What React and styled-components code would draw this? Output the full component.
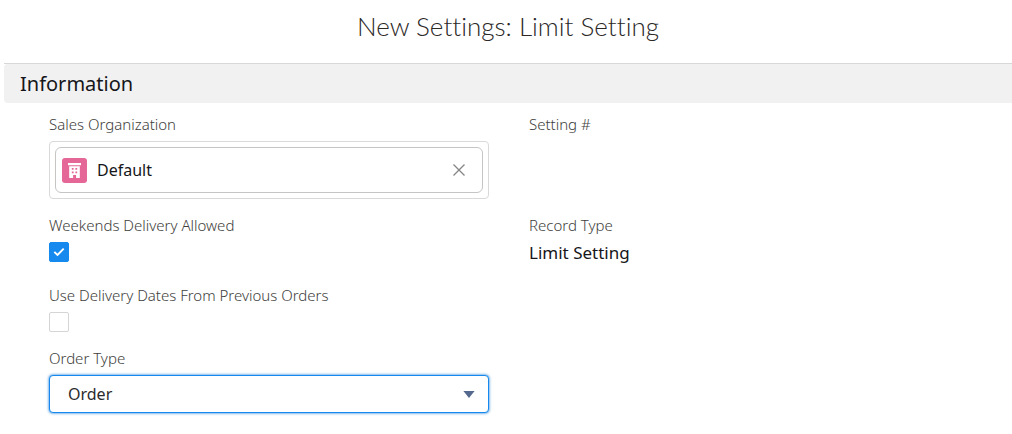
import React, { useState } from "react";
import styled, { createGlobalStyle } from "styled-components";

const GlobalStyle = createGlobalStyle`
  *, *::before, *::after { box-sizing: border-box; }
  body {
    margin: 0;
    background: #ffffff;
    color: #16161a;
    font-family: "Noto Sans", "Open Sans", sans-serif;
    font-size: 15px;
  }
`;

const Form = styled.form`
  padding-left: 4px;
`;

const Header = styled.header`
  padding: 8px 16px 19px;
  border-bottom: 1px solid #d8d8d8;
  text-align: center;
`;

const Title = styled.h1`
  margin: 0;
  font-family: Lato, sans-serif;
  font-size: 26px;
  font-weight: 300;
  font-variant-ligatures: none;
  line-height: 36px;
  color: #2b2826;
`;

const SectionTitle = styled.h2`
  margin: 0;
  padding: 7px 16px 6px;
  border-radius: 4px 0 0 4px;
  background: #f1f1f1;
  font-size: 20px;
  font-weight: 400;
  line-height: 26px;
`;

const Fields = styled.div`
  display: grid;
  grid-template-columns: 1fr 1fr;
  gap: 17px 40px;
  padding: 12px 43px 20px 45px;
`;

const Field = styled.div`
  grid-column: ${({ $column = 1 }) => $column};
  display: flex;
  flex-direction: column;
  gap: 8px;
`;

const Label = styled.label`
  align-self: flex-start;
  font-size: 15px;
  font-weight: 350;
  line-height: 18px;
  color: #3e3e3c;
`;

const Value = styled.output`
  padding-bottom: 5px;
  font-size: 17px;
  line-height: 22px;
`;

const LookupFrame = styled.div`
  padding: 5px;
  border: 1px solid #d9d9d9;
  border-radius: 4px;
`;

const LookupPill = styled.div`
  display: flex;
  align-items: center;
  gap: 10px;
  height: 46px;
  padding: 0 12px 0 6px;
  border: 1px solid #c6c5c4;
  border-radius: 6px;
`;

const RecordIcon = styled.svg`
  flex: none;
  width: 25px;
  height: 25px;
  border-radius: 3px;
  background: #e56798;
`;

const LookupInput = styled.input`
  flex: 1;
  min-width: 0;
  padding: 0;
  border: 0;
  outline: 0;
  background: none;
  color: inherit;
  font: inherit;
  font-size: 16px;
`;

const ClearButton = styled.button`
  display: flex;
  flex: none;
  align-items: center;
  justify-content: center;
  width: 22px;
  height: 22px;
  padding: 0;
  border: 0;
  background: none;
  color: #858585;
  cursor: pointer;
`;

const CheckWrap = styled.span`
  display: grid;
  width: 20px;
  height: 20px;

  > * { grid-area: 1 / 1; }
`;

const Checkbox = styled.input`
  appearance: none;
  width: 20px;
  height: 20px;
  margin: 0;
  border: 1px solid #d6d5d4;
  border-radius: 2px;
  background: #ffffff;

  &:checked { border-color: #1589ee; background: #1589ee; }
  & + svg { display: none; pointer-events: none; }
  &:checked + svg { display: block; z-index: 1; }
`;

const SelectWrap = styled.div`
  display: grid;
  align-items: center;

  > * { grid-area: 1 / 1; }
  > svg { z-index: 1; justify-self: end; margin-right: 14px; pointer-events: none; }
`;

const Select = styled.select`
  appearance: none;
  width: 100%;
  height: 38px;
  padding: 0 36px 0 18px;
  border: 1px solid #1589ee;
  border-radius: 4px;
  outline: 0;
  background: #ffffff;
  box-shadow: 0 0 3px #0070d2;
  color: #2b2b2e;
  font: inherit;
  font-size: 16px;
`;

function CheckField({ id, label, defaultChecked }) {
  return (
    <Field>
      <Label htmlFor={id}>{label}</Label>
      <CheckWrap>
        <Checkbox id={id} type="checkbox" defaultChecked={defaultChecked} />
        <svg width="20" height="20" viewBox="0 0 20 20" aria-hidden="true">
          <path d="M5.3 9.9l3.2 3.1 6.2-6.3" fill="none" stroke="#fff" strokeWidth="1.9" />
        </svg>
      </CheckWrap>
    </Field>
  );
}

export default function App() {
  const [organization, setOrganization] = useState("Default");

  return (
    <>
      <GlobalStyle />
      <Form>
        <Header>
          <Title>New Settings: Limit Setting</Title>
        </Header>
        <SectionTitle>Information</SectionTitle>
        <Fields>
          <Field>
            <Label htmlFor="organization">Sales Organization</Label>
            <LookupFrame>
              <LookupPill>
                <RecordIcon viewBox="0 0 25 25" aria-hidden="true">
                  <path d="M6 5h13v2.2H6z" fill="#fff" />
                  <path
                    fillRule="evenodd"
                    fill="#fff"
                    d="M7.2 8.2h10.6V20h-3.7v-3h-3v3H7.2zM9.8 10v1.8h1.8V10zm3.6 0v1.8h1.8V10zm-3.6 3.4v1.8h1.8v-1.8zm3.6 0v1.8h1.8v-1.8z"
                  />
                </RecordIcon>
                <LookupInput
                  id="organization"
                  value={organization}
                  onChange={(event) => setOrganization(event.target.value)}
                />
                <ClearButton type="button" aria-label="Clear selection" onClick={() => setOrganization("")}>
                  <svg width="12" height="12" viewBox="0 0 12 12" aria-hidden="true">
                    <path d="M.5.5l11 11M11.5.5l-11 11" fill="none" stroke="currentColor" strokeWidth="1.3" />
                  </svg>
                </ClearButton>
              </LookupPill>
            </LookupFrame>
          </Field>
          <Field $column={2}>
            <Label as="span">Setting #</Label>
          </Field>

          <CheckField id="weekends" label="Weekends Delivery Allowed" defaultChecked />
          <Field $column={2}>
            <Label htmlFor="record-type">Record Type</Label>
            <Value id="record-type">Limit Setting</Value>
          </Field>

          <CheckField id="previous-dates" label="Use Delivery Dates From Previous Orders" />

          <Field>
            <Label htmlFor="order-type">Order Type</Label>
            <SelectWrap>
              <Select id="order-type" defaultValue="Order">
                <option>Order</option>
              </Select>
              <svg width="12" height="7" viewBox="0 0 12 7" aria-hidden="true">
                <path d="M.4 0h11.2L6 7z" fill="#54698d" />
              </svg>
            </SelectWrap>
          </Field>
        </Fields>
      </Form>
    </>
  );
}
